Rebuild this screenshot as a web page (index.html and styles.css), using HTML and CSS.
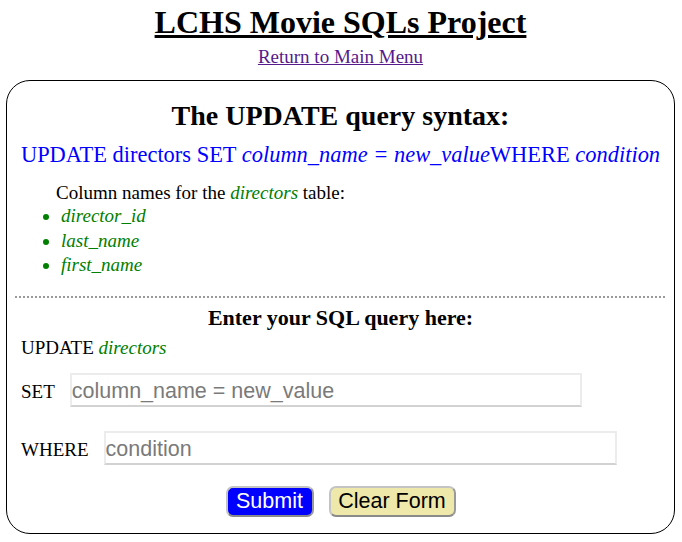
FILE: index.html
```html
<!DOCTYPE html>
<html>
<head>
<meta charset="utf-8">
<link rel="stylesheet" href="styles.css">
</head>
<body>
<h1 class="title">LCHS Movie SQLs Project</h1>
<div class="menu"><a href="#">Return to Main Menu</a></div>
<div class="box">
  <h2 class="syntax-head">The UPDATE query syntax:</h2>
  <p class="syntax">UPDATE directors SET <i>column_name = new_value</i>WHERE <i>condition</i></p>
  <p class="cols">Column names for the <i class="green">directors</i> table:</p>
  <ul class="collist">
    <li>director_id</li>
    <li>last_name</li>
    <li>first_name</li>
  </ul>
  <div class="sep"></div>
  <h3 class="enter">Enter your SQL query here:</h3>
  <p class="upd">UPDATE <i class="green">directors</i></p>
  <form class="form">
    <div class="row set-row"><label class="lbl">SET</label><input class="field set" type="text" placeholder="column_name = new_value"></div>
    <div class="row where-row"><label class="lbl">WHERE</label><input class="field where" type="text" placeholder="condition"></div>
    <div class="buttons">
      <button type="button" class="btn submit">Submit</button>
      <button type="reset" class="btn clear">Clear Form</button>
    </div>
  </form>
</div>
</body>
</html>
```
FILE: styles.css
```css
html, body { margin: 0; padding: 0; background: #fff; }
body {
  font-family: "Liberation Serif", "Times New Roman", serif;
  color: #000;
  padding: 0 7px 0 6px;
}
.title {
  margin: 0;
  padding-top: 4px;
  font-size: 32px;
  line-height: 37px;
  text-align: center;
  text-decoration: underline;
  font-weight: bold;
}
.menu {
  text-align: center;
  font-size: 19px;
  line-height: 22px;
  margin-top: 5px;
}
.menu a { color: #551a8b; }
.box {
  margin-top: 12px;
  border: 1px solid #000;
  border-radius: 24px;
  height: 454px;
  box-sizing: border-box;
  padding: 0 14px;
}
.syntax-head {
  margin: 19px 0 0;
  font-size: 28px;
  line-height: 32px;
  text-align: center;
}
.syntax {
  margin: 10px -6px 0;
  color: #0000ff;
  font-size: 22.45px;
  line-height: 26px;
  text-align: center;
  white-space: nowrap;
}
.green { color: #008000; }
.cols {
  margin: 14px 0 0 35px;
  font-size: 19px;
  line-height: 22px;
}
.collist {
  margin: 0;
  padding-left: 40px;
  color: #008000;
  font-style: italic;
  font-size: 19px;
  line-height: 24.5px;
}
.sep {
  margin: 18px -6px 0 -6px;
  height: 2px;
  width: 650px;
  background: repeating-linear-gradient(to right, #9a9a9a 0 2px, transparent 2px 4px);
}
.enter {
  margin: 7px 0 0;
  font-size: 22px;
  line-height: 26px;
  text-align: center;
}
.upd {
  margin: 6px 0 0;
  font-size: 19px;
  line-height: 22px;
}
.form { margin: 0; }
.row {
  display: flex;
  align-items: baseline;
}
.set-row { margin-top: 14px; }
.where-row { margin-top: 24px; }
.lbl {
  font-size: 19px;
  margin-right: 15px;
}
.field {
  height: 34px;
  box-sizing: border-box;
  border: 2px solid #ececec;
  border-bottom-color: #d2d2d2;
  font-family: "Liberation Sans", Arial, sans-serif;
  font-size: 21.5px;
  padding: 4px 0 0;
  outline: none;
}
.field::placeholder { color: #7a7a7a; }
.set { width: 512px; }
.where { width: 513px; }
.buttons {
  display: flex;
  justify-content: center;
  gap: 15px;
  margin-top: 21px;
}
.btn {
  font-family: "Liberation Sans", Arial, sans-serif;
  font-size: 21.5px;
  height: 31px;
  border-radius: 7px;
  padding: 0;
  border: 2px solid #c4c4c4;
  border-bottom-color: #8a8a8a;
  border-right-color: #9a9a9a;
}
.submit { background: #0000ff; color: #fff; width: 88px; }
.clear { background: #eee8aa; color: #000; width: 127px; }
```
